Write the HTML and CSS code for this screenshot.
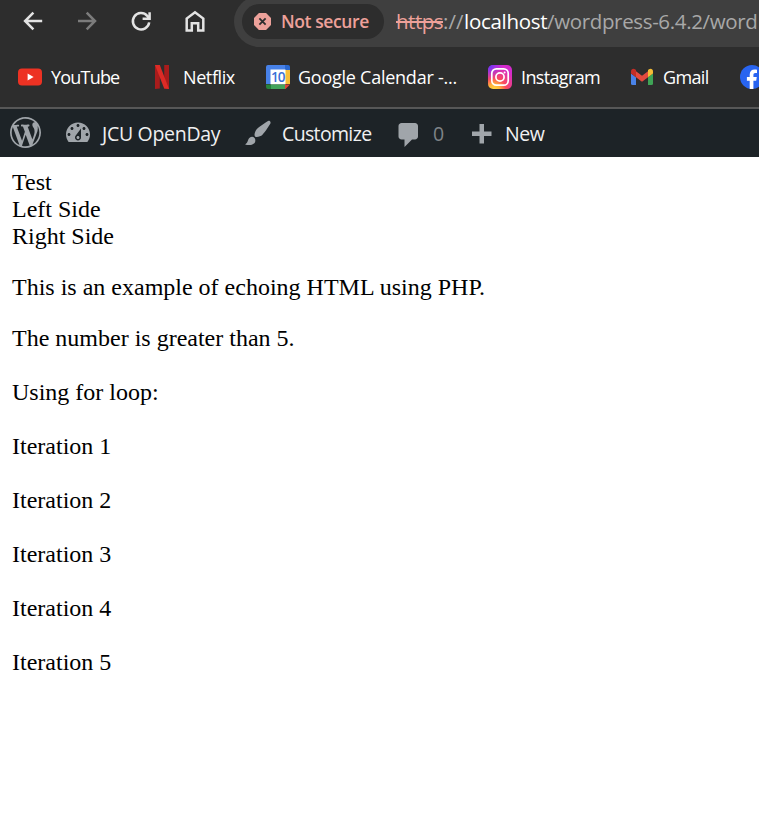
FILE: index.html
```html
<!DOCTYPE html>
<html lang="en">
<head>
<meta charset="utf-8">
<title>JCU OpenDay</title>
<link rel="stylesheet" href="styles.css">
</head>
<body>
<header class="browser">
  <div class="toolbar">
    <nav class="nav">
      <svg viewBox="0 0 24 24"><path d="M21.2 12H4.4M12.4 3.7L4.1 12L12.4 20.3"/></svg>
      <svg class="off" viewBox="0 0 24 24"><path d="M3 12h17M11.7 3.7L20 12L11.7 20.3"/></svg>
      <svg viewBox="0 0 24 24"><path d="M20.2 13.4A8.2 8.2 0 1 1 18.2 6.8L20.4 9M20.6 3.2v6.6h-7"/></svg>
      <svg viewBox="0 0 24 24"><path d="M3.7 21.6V9.6L12 3.3l8.3 6.3v12h-5.1v-7.3H8.8v7.3z"/></svg>
    </nav>
    <div class="address">
      <div class="chip">
        <svg viewBox="0 0 18 18"><path fill="#eda19a" d="M5.2 0h7.6L18 5.2v7.6L12.8 18H5.2L0 12.8V5.2z"/><path d="M5.7 5.7l6.6 6.6M12.3 5.7l-6.6 6.6" stroke="#2d2d2d" stroke-width="1.9"/></svg>
        <span>Not secure</span>
      </div>
      <div class="url"><span class="scheme">https</span><span class="sep">://</span><span class="host">localhost</span><span class="path">/wordpress-6.4.2/word</span></div>
    </div>
  </div>
  <div class="bookmarks">
    <a class="youtube"><svg viewBox="0 0 24 24"><rect y="3.5" width="24" height="17" rx="4" fill="#ed3223"/><path d="M9.6 8.5v7l6-3.5z" fill="#fff"/></svg><span>YouTube</span></a>
    <a class="netflix"><svg viewBox="0 0 24 24"><path d="M5 0h4.8v23.5L5 24zM14.2 0H19v24l-4.8-.5z" fill="#a91c1c"/><path d="M5 0h4.8L19 24l-4.8-.5z" fill="#dc2b26"/></svg><span>Netflix</span></a>
    <a class="calendar"><svg viewBox="0 0 24 24"><path fill="#4781e8" d="M2 0h17v5H5v14H0V2a2 2 0 0 1 2-2z"/><path fill="#2967cf" d="M19 0h3a2 2 0 0 1 2 2v3h-5z"/><path fill="#f7bf37" d="M19 5h5v14h-5z"/><path fill="#fff" d="M4.5 4.5h15v15h-15z"/><path fill="#26833d" d="M0 19.5h5V24H2a2 2 0 0 1-2-2z"/><path fill="#43a35b" d="M5 19.5h14V24H5z"/><path fill="#df4639" d="M19 19.5h5L19.5 24H19z"/><text x="11.7" y="16.7" text-anchor="middle" class="date">10</text></svg><span>Google Calendar -...</span></a>
    <a class="instagram"><svg viewBox="0 0 24 24"><defs><radialGradient id="warm" cx=".25" cy="1.05" r="1"><stop offset="0" stop-color="#ffdb42"/><stop offset=".25" stop-color="#ffb43a"/><stop offset=".5" stop-color="#fb4b5b"/><stop offset="1" stop-color="#d42acb"/></radialGradient><radialGradient id="cool" cx="0" cy="0" r=".65"><stop offset="0" stop-color="#4a3cff"/><stop offset="1" stop-color="#a52cff" stop-opacity="0"/></radialGradient></defs><rect width="24" height="24" rx="5" fill="url(#warm)"/><rect width="24" height="24" rx="5" fill="url(#cool)"/><g fill="none" stroke="#fff" stroke-width="1.7"><rect x="3.8" y="3.8" width="16.4" height="16.4" rx="4.5"/><circle cx="12" cy="12" r="4.1"/></g><circle cx="16.6" cy="7.4" r="1" fill="#fff"/></svg><span>Instagram</span></a>
    <a class="gmail"><svg viewBox="0 0 24 24"><path fill="#4a83e8" d="M1 8.5l5 3.7V20H2.5A1.5 1.5 0 0 1 1 18.5z"/><path fill="#3fa456" d="M18 12.2l5-3.7v10a1.5 1.5 0 0 1-1.5 1.5H18z"/><path fill="#e34a3e" d="M6 6.2l6 4.5 6-4.5v6l-6 4.5-6-4.5z"/><path fill="#c32e27" d="M6 12.2L1 8.5V6.3c0-2.2 2.3-3.2 4-2l1 .8z"/><path fill="#f5bd37" d="M18 12.2l5-3.7V6.3c0-2.2-2.3-3.2-4-2l-1 .8z"/></svg><span>Gmail</span></a>
    <a class="facebook"><svg viewBox="0 0 24 24"><circle cx="12" cy="12" r="12" fill="#2864f0"/><path fill="#fff" d="M9.7 24v-8.2H6.9v-3.7h2.8V9.7c0-3.5 1.9-5.2 5.1-5.2.9 0 1.7.1 2.2.2V8h-1.6c-1.5 0-2 .7-2 2v2.1h3.4l-.6 3.7h-2.8V24z"/></svg></a>
  </div>
</header>
<nav class="adminbar">
  <a class="wp"><svg viewBox="0 0 20 20"><path d="M20 10c0-5.51-4.49-10-10-10C4.48 0 0 4.49 0 10c0 5.52 4.48 10 10 10 5.51 0 10-4.48 10-10zM7.78 15.37L4.37 6.22c.55-.02 1.17-.08 1.17-.08.5-.06.44-1.13-.06-1.11 0 0-1.45.11-2.37.11-.18 0-.37 0-.58-.01C4.12 2.69 6.87 1.11 10 1.11c2.33 0 4.45.87 6.05 2.34-.68-.11-1.65.39-1.65 1.58 0 .74.45 1.36.9 2.1.35.61.55 1.36.55 2.46 0 1.49-1.4 5-1.4 5l-3.03-8.37c.54-.02.82-.17.82-.17.5-.05.44-1.25-.06-1.22 0 0-1.44.12-2.38.12-.87 0-2.33-.12-2.33-.12-.5-.03-.56 1.2-.06 1.22l.92.08 1.26 3.41zM17.41 10c.24-.64.74-1.87.43-4.25.7 1.29 1.05 2.71 1.05 4.25 0 3.29-1.73 6.24-4.4 7.78.97-2.59 1.94-5.2 2.92-7.78zM6.1 18.09C3.12 16.65 1.11 13.53 1.11 10c0-1.3.23-2.48.72-3.59C3.25 10.3 4.67 14.2 6.1 18.09zm4.03-6.63l2.58 6.98c-.86.29-1.76.45-2.71.45-.79 0-1.57-.11-2.29-.33.81-2.38 1.62-4.74 2.42-7.1z"/></svg></a>
  <a class="site"><svg viewBox="0 0 20 20"><path d="M3.76 16h12.48c1.1-1.37 1.76-3.11 1.76-5 0-4.42-3.58-8-8-8s-8 3.58-8 8c0 1.89.66 3.63 1.76 5zM10 4c.55 0 1 .45 1 1s-.45 1-1 1-1-.45-1-1 .45-1 1-1zM6 6c.55 0 1 .45 1 1s-.45 1-1 1-1-.45-1-1 .45-1 1-1zm8 0c.55 0 1 .45 1 1s-.45 1-1 1-1-.45-1-1 .45-1 1-1zm-5.37 5.55L12 7v6c0 1.1-.9 2-2 2s-2-.9-2-2c0-.57.24-1.08.63-1.45zM4 10c.55 0 1 .45 1 1s-.45 1-1 1-1-.45-1-1 .45-1 1-1zm12 0c.55 0 1 .45 1 1s-.45 1-1 1-1-.45-1-1 .45-1 1-1zm-5 3c0-.55-.45-1-1-1s-1 .45-1 1 .45 1 1 1 1-.45 1-1z"/></svg><span>JCU OpenDay</span></a>
  <a class="customize"><svg viewBox="0 0 20 20"><path d="M18.33 3.57s.27-.8-.31-1.36c-.53-.52-1.22-.24-1.22-.24-.61.3-5.76 3.47-7.67 5.57-.86.96-2.06 3.79-1.09 4.82.92.98 3.96-.17 4.79-1 2.06-2.06 5.21-7.17 5.5-7.79zM1.4 17.65c2.37-1.56 1.46-3.41 3.23-4.64.93-.65 2.22-.62 3.08.29.63.67.8 2.57-.16 3.46-1.57 1.45-4 1.55-6.15.89z"/></svg><span>Customize</span></a>
  <a class="comments"><svg viewBox="0 0 20 20"><path d="M5 2h9c1.1 0 2 .9 2 2v7c0 1.1-.9 2-2 2h-2l-5 5v-5H5c-1.1 0-2-.9-2-2V4c0-1.1.9-2 2-2z"/></svg><span>0</span></a>
  <a class="new"><svg viewBox="0 0 20 20"><path d="M17 9v3h-5v5H9v-5H4V9h5V4h3v5h5z"/></svg><span>New</span></a>
</nav>
<main>
  <div>Test</div>
  <div>Left Side</div>
  <div>Right Side</div>
  <p>This is an example of echoing HTML using PHP.</p>
  The number is greater than 5.<br><br>
  Using for loop:<br><br>
  Iteration 1<br><br>
  Iteration 2<br><br>
  Iteration 3<br><br>
  Iteration 4<br><br>
  Iteration 5
</main>
</body>
</html>
```
FILE: styles.css
```css
* { box-sizing: border-box; }
body { margin: 0; background: #fff; color: #000; overflow: hidden; }
svg { display: block; flex: none; }
span { white-space: nowrap; }

.browser {
  height: 109px;
  background: #2d2d2d;
  border-bottom: 2px solid #575757;
  font-family: "Open Sans", sans-serif;
  overflow: hidden;
}
.toolbar { display: flex; height: 47px; }
.nav { display: flex; gap: 30px; width: 234px; padding: 9px 0 0 21px; flex: none; }
.nav svg { width: 24px; height: 24px; fill: none; stroke: #e3e3e3; stroke-width: 2.5; }
.nav .off { stroke: #7c7c7c; }
.address {
  flex: none;
  display: flex;
  align-items: center;
  width: 560px;
  height: 51px;
  margin-top: -4px;
  padding-left: 8px;
  border-radius: 26px 0 0 26px;
  background: #3f3f3f;
}
.chip {
  display: flex;
  align-items: center;
  width: 142px;
  height: 35px;
  padding-left: 12px;
  border-radius: 18px;
  background: #2d2d2d;
  color: #eda19a;
  font-size: 17.5px;
  font-weight: 600;
}
.chip svg { width: 17px; height: 17px; margin-right: 10px; }
.chip span { letter-spacing: -0.4px; padding-bottom: 2px; }
.url { display: flex; margin-left: 12px; padding-bottom: 2px; font-size: 20.5px; line-height: 28px; color: #a8a8a8; }
.scheme { width: 47px; color: #eda19a; text-decoration: line-through; letter-spacing: -0.5px; }
.sep { width: 21px; }
.host { width: 83px; color: #fff; letter-spacing: -0.3px; }
.path { letter-spacing: -0.35px; }

.bookmarks {
  display: grid;
  grid-template-columns: 132px 116px 222px 142px 110px 40px;
  align-items: center;
  height: 60px;
  padding-left: 18px;
  color: #fff;
  font-size: 18px;
}
.bookmarks a { display: flex; align-items: center; gap: 9px; }
.bookmarks svg { width: 24px; height: 24px; }
.bookmarks span { letter-spacing: -0.4px; padding-bottom: 1px; }
.bookmarks .youtube span { letter-spacing: -0.8px; }
.bookmarks .calendar { gap: 8px; }
.bookmarks .calendar span { letter-spacing: -0.25px; }
.bookmarks .instagram span, .bookmarks .gmail span { letter-spacing: -0.65px; }
.date { font: 600 13.5px "Open Sans", sans-serif; fill: #3a6fd6; letter-spacing: -0.9px; }

.adminbar {
  display: grid;
  grid-template-columns: 53px 180px 151px 72px 100px;
  height: 48px;
  padding-left: 10px;
  background: #1d2327;
  color: #f0f0f1;
  font: 19.5px "Open Sans", sans-serif;
}
.adminbar a { display: flex; align-items: center; gap: 9px; }
.adminbar svg { width: 30px; height: 30px; fill: #a0a5aa; }
.adminbar span { letter-spacing: -0.4px; }
.adminbar .site span { letter-spacing: -0.3px; }
.adminbar .customize span { letter-spacing: -0.65px; }
.adminbar .wp svg { width: 31px; height: 31px; margin-bottom: 1px; }
.adminbar .comments { color: #7f8387; }
.adminbar .comments svg { margin-top: 3px; }

main { padding: 12px; font: 24px/27px "Liberation Serif", serif; }
p { margin: 24px 0; }
```
